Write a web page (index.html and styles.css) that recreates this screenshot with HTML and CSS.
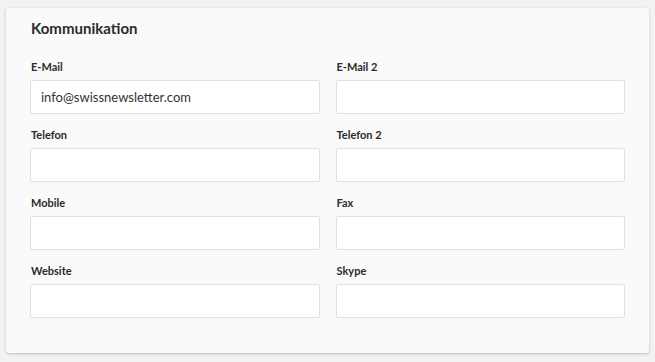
FILE: index.html
```html
<!DOCTYPE html>
<html lang="de">
<head>
  <meta charset="UTF-8">
  <meta name="viewport" content="width=device-width, initial-scale=1.0">
  <title>Kommunikation</title>
  <link rel="stylesheet" href="styles.css">
</head>
<body>
  <div class="card">
    <h2>Kommunikation</h2>
    <form class="fields">
      <div class="field">
        <label for="email">E-Mail</label>
        <input type="text" id="email" value="info@swissnewsletter.com">
      </div>
      <div class="field">
        <label for="email2">E-Mail 2</label>
        <input type="text" id="email2">
      </div>
      <div class="field">
        <label for="phone">Telefon</label>
        <input type="text" id="phone">
      </div>
      <div class="field">
        <label for="phone2">Telefon 2</label>
        <input type="text" id="phone2">
      </div>
      <div class="field">
        <label for="mobile">Mobile</label>
        <input type="text" id="mobile">
      </div>
      <div class="field">
        <label for="fax">Fax</label>
        <input type="text" id="fax">
      </div>
      <div class="field">
        <label for="website">Website</label>
        <input type="text" id="website">
      </div>
      <div class="field">
        <label for="skype">Skype</label>
        <input type="text" id="skype">
      </div>
    </form>
  </div>
</body>
</html>
```

FILE: styles.css
```css
body {
  font-family: Lato, "Open Sans", sans-serif;
  background-color: #f2f2f1;
  margin: 0;
  padding: 8px 6px;
  color: #333;
}

.card {
  background-color: #fafafa;
  border-radius: 3px;
  box-shadow: 0 1px 3px rgba(0, 0, 0, 0.22);
  padding: 10px 24px 35px;
}

h2 {
  font-size: 15px;
  line-height: 20px;
  font-weight: 700;
  margin: 0 0 22px 1px;
  color: #2b2b2b;
}

.fields {
  display: grid;
  grid-template-columns: 1fr 1fr;
  column-gap: 16px;
  row-gap: 14px;
}

.field {
  display: flex;
  flex-direction: column;
}

label {
  font-size: 11px;
  line-height: 14px;
  font-weight: 700;
  color: #2b2b2b;
  margin-bottom: 6px;
  padding-left: 1px;
}

input {
  box-sizing: border-box;
  height: 34px;
  width: 100%;
  margin: 0;
  padding: 0 10px;
  border: 1px solid #e1e1e1;
  border-radius: 2px;
  background-color: #fff;
  font-family: Lato, "Open Sans", sans-serif;
  font-size: 13px;
  color: #333;
  outline: none;
}
```
